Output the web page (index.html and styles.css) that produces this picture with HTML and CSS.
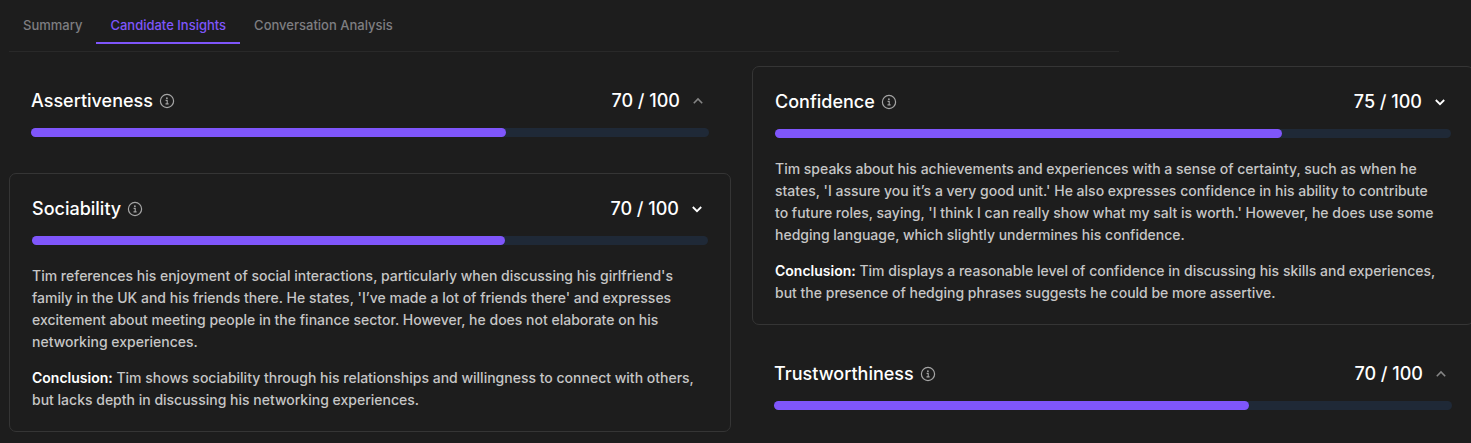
FILE: index.html
```html
<!DOCTYPE html>
<html lang="en">
<head>
  <meta charset="UTF-8">
  <meta name="viewport" content="width=device-width, initial-scale=1">
  <title>Candidate Insights</title>
  <link rel="stylesheet" href="styles.css">
</head>
<body>
  <!-- shared icons -->
  <svg class="sprite" aria-hidden="true">
    <symbol id="info" viewBox="0 0 16 16">
      <circle cx="8" cy="8" r="6.6" fill="none" stroke="currentColor" stroke-width="1.2"/>
      <circle cx="7.9" cy="5.2" r="0.9" fill="currentColor"/>
      <path d="M6.6 7.4H8.2V10.8M6.5 10.9H9.6" fill="none" stroke="currentColor" stroke-width="1.1"/>
    </symbol>
    <symbol id="chevron-up" viewBox="0 0 16 16">
      <path d="M3.8 10.2L8 6L12.2 10.2" fill="none" stroke="currentColor" stroke-width="1.6"/>
    </symbol>
    <symbol id="chevron-down" viewBox="0 0 16 16">
      <path d="M3.8 6L8 10.2L12.2 6" fill="none" stroke="currentColor" stroke-width="1.8"/>
    </symbol>
  </svg>

  <nav class="tabs">
    <button class="tab">Summary</button>
    <button class="tab active">Candidate Insights</button>
    <button class="tab">Conversation Analysis</button>
  </nav>

  <main class="insights">
    <div class="column">
      <section class="card">
        <div class="card-header">
          <h2>Assertiveness</h2>
          <button class="info" aria-label="About assertiveness"><svg><use href="#info"/></svg></button>
          <span class="score">70 / 100</span>
          <button class="toggle" aria-label="Show assertiveness" aria-expanded="false"><svg><use href="#chevron-up"/></svg></button>
        </div>
        <div class="bar"><div class="bar-fill" style="width: 70%"></div></div>
      </section>

      <section class="card open">
        <div class="card-header">
          <h2>Sociability</h2>
          <button class="info" aria-label="About sociability"><svg><use href="#info"/></svg></button>
          <span class="score">70 / 100</span>
          <button class="toggle" aria-label="Hide sociability" aria-expanded="true"><svg><use href="#chevron-down"/></svg></button>
        </div>
        <div class="bar"><div class="bar-fill" style="width: 70%"></div></div>
        <div class="details">
          <p>Tim references his enjoyment of social interactions, particularly when discussing his girlfriend's family in the UK and his friends there. He states, 'I’ve made a lot of friends there' and expresses excitement about meeting people in the finance sector. However, he does not elaborate on his networking experiences.</p>
          <p><strong>Conclusion:</strong> Tim shows sociability through his relationships and willingness to connect with others, but lacks depth in discussing his networking experiences.</p>
        </div>
      </section>
    </div>

    <div class="column">
      <section class="card open">
        <div class="card-header">
          <h2>Confidence</h2>
          <button class="info" aria-label="About confidence"><svg><use href="#info"/></svg></button>
          <span class="score">75 / 100</span>
          <button class="toggle" aria-label="Hide confidence" aria-expanded="true"><svg><use href="#chevron-down"/></svg></button>
        </div>
        <div class="bar"><div class="bar-fill" style="width: 75%"></div></div>
        <div class="details">
          <p>Tim speaks about his achievements and experiences with a sense of certainty, such as when he states, 'I assure you it’s a very good unit.' He also expresses confidence in his ability to contribute to future roles, saying, 'I think I can really show what my salt is worth.' However, he does use some hedging language, which slightly undermines his confidence.</p>
          <p><strong>Conclusion:</strong> Tim displays a reasonable level of confidence in discussing his skills and experiences, but the presence of hedging phrases suggests he could be more assertive.</p>
        </div>
      </section>

      <section class="card">
        <div class="card-header">
          <h2>Trustworthiness</h2>
          <button class="info" aria-label="About trustworthiness"><svg><use href="#info"/></svg></button>
          <span class="score">70 / 100</span>
          <button class="toggle" aria-label="Show trustworthiness" aria-expanded="false"><svg><use href="#chevron-up"/></svg></button>
        </div>
        <div class="bar"><div class="bar-fill" style="width: 70%"></div></div>
      </section>
    </div>
  </main>
</body>
</html>
```
FILE: styles.css
```css
* { box-sizing: border-box; }
body {
  margin: 0;
  padding: 8px 0 0 9px;
  background: #1d1d1d;
  color: #fff;
  font-family: Inter, sans-serif;
  overflow-x: hidden;
}
button {
  padding: 0;
  border: none;
  background: none;
  color: inherit;
  font-family: inherit;
  cursor: pointer;
}
h2, p { margin: 0; }
svg { display: block; width: 16px; height: 16px; }
.sprite { display: none; }

.tabs {
  display: flex;
  max-width: 1110px;
  padding-bottom: 7px;
  border-bottom: 1px solid #292929;
}
.tab {
  height: 36px;
  padding: 0 14px;
  border-bottom: 2px solid transparent;
  color: #7e7e81;
  font-size: 13px;
  font-weight: 500;
}
.tab.active { color: #7f56fb; border-color: #7f56fb; }

.insights {
  display: grid;
  grid-template-columns: 1fr 1fr;
  gap: 21px;
  margin: 14px -3px 0 0;
}
.column { display: flex; flex-direction: column; gap: 14px; }

.card { padding: 22px; }
.card.open {
  padding-bottom: 20px;
  border: 1px solid #353535;
  border-radius: 7px;
}
.card-header {
  display: flex;
  align-items: center;
  height: 25px;
  margin-bottom: 15px;
}
h2, .score { font-size: 18px; font-weight: 500; }
.score { margin-left: auto; }
.info { margin-left: 6px; color: #a5a5a5; }
.toggle { margin-left: 7px; padding: 0 3px; color: #858585; }
.open .toggle { color: #fff; }

.bar { height: 9px; border-radius: 5px; background: #1f2937; }
.bar-fill { height: 100%; border-radius: 5px; background: #7f56fb; }

.details {
  display: flex;
  flex-direction: column;
  gap: 14px;
  margin-top: 20px;
  padding-right: 7px;
  color: #c6c6c6;
  font-size: 14px;
  font-weight: 500;
  line-height: 22px;
}
.details strong { color: #fff; font-weight: 600; }
```
